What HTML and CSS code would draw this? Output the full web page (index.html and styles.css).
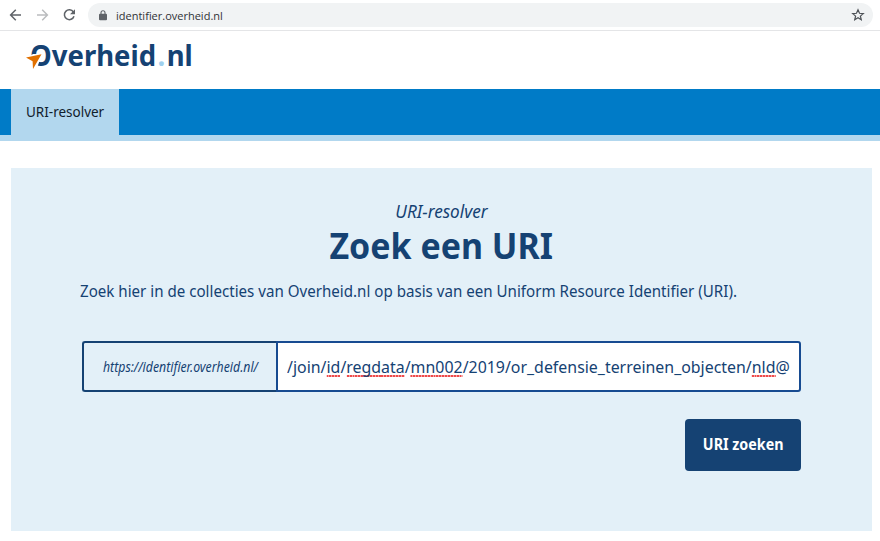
FILE: index.html
```html
<!DOCTYPE html>
<html lang="nl">
<head>
<meta charset="utf-8">
<title>URI-resolver | Overheid.nl</title>
<link rel="stylesheet" href="styles.css">
</head>
<body>
<div class="browser">
  <svg class="controls" width="88" height="30" viewBox="0 0 88 30" fill="none" stroke="#5f6368" stroke-width="1.5">
    <path d="M21 15H11M15.8 9.8 10.6 15l5.2 5.2"/>
    <path stroke="#babcbe" d="M37 15h10.5M42.2 9.8l5.2 5.2-5.2 5.2"/>
    <path d="M73.4 12A4.9 4.9 0 1 0 74 16.2"/>
    <path fill="#5f6368" stroke="none" d="M75 9.2v5h-5z"/>
  </svg>
  <div class="address">
    <svg class="lock" width="8" height="11" viewBox="0 0 8 11"><path d="M2 4V2.8a2 2 0 0 1 4 0V4" fill="none" stroke="#5f6368" stroke-width="1.1"/><rect y="3.8" width="8" height="6.4" rx="1" fill="#5f6368"/></svg>
    <span class="url">identifier.overheid.nl</span>
    <svg class="star" width="14" height="14" viewBox="0 0 14 14"><path d="m7 1.8 1.5 3.5 3.8.3-2.9 2.5.9 3.7L7 9.8l-3.3 2 .9-3.7-2.9-2.5 3.8-.3z" fill="none" stroke="#4d5156" stroke-width="1.2"/></svg>
  </div>
</div>
<header class="brand">
  <div class="logo"><span class="wordmark">Overheid<span class="dot">.</span>nl</span>
    <svg class="arrow" width="18" height="17" viewBox="0 0 18 17"><path d="M3 3.5 7 1l9 0L11 15l-5 0z" fill="#fff"/><path d="M0 4.5 15.5 1.3 7 16 6.6 8.2z" fill="#e17000"/></svg>
  </div>
</header>
<nav class="nav"><a class="tab"><span>URI-resolver</span></a></nav>
<main class="panel">
  <p class="kicker">URI-resolver</p>
  <h1>Zoek een URI</h1>
  <p class="intro">Zoek hier in de collecties van Overheid.nl op basis van een Uniform Resource Identifier (URI).</p>
  <div class="field">
    <div class="prefix"><span>https://identifier.overheid.nl/</span></div>
    <div class="input"><span class="value">/join/<u>id</u>/<u>regdata</u>/<u>mn002</u>/2019/or_defensie_terreinen_objecten/<u>nld</u>@</span></div>
  </div>
  <button class="submit"><span>URI zoeken</span></button>
</main>
</body>
</html>
```
FILE: styles.css
```css
* { box-sizing: border-box; }
body { margin: 0; height: 541px; overflow: hidden; background: #fff; color: #154273; font-family: "Noto Sans", sans-serif; }
p, h1 { margin: 0; white-space: nowrap; }
.browser { display: flex; height: 31px; border-bottom: 1px solid #e4e5e7; }
.controls { flex: none; }
.address { display: flex; align-items: center; width: 785px; height: 24px; margin-top: 3px; padding: 0 8px 0 11px; border-radius: 12px; background: #f1f3f4; }
.url { flex: 1; margin-left: 9px; font-family: "Open Sans", sans-serif; font-size: 11px; color: #303236; white-space: nowrap; }
.brand { height: 58px; padding: 4px 0 0 30px; }
.logo { position: relative; width: max-content; font-size: 28.5px; line-height: 40px; font-weight: 700; white-space: nowrap; }
.wordmark { display: inline-block; transform: scaleX(.965); transform-origin: left; }
.dot { margin: 0 1.5px; color: #9fd0ee; }
.arrow { position: absolute; left: -4px; top: 18px; }
.nav { height: 52px; padding-left: 11px; background: #007bc7; border-bottom: 6px solid #b2d7ee; }
.tab { display: block; width: 108px; height: 46px; padding-left: 15px; background: #b2d7ee; color: #10202c; font-size: 14px; line-height: 45px; white-space: nowrap; }
.tab span { display: inline-block; transform: scaleX(.963); transform-origin: left; }
.panel { display: flex; flex-direction: column; width: 861px; height: 363px; margin: 27px 0 0 11px; padding: 32px 71px 0 70px; background: #e3f0f8; }
.kicker { align-self: center; font-size: 18px; line-height: 22px; font-style: italic; transform: scaleX(.953); }
h1 { align-self: center; margin-top: 3px; font-size: 36.5px; line-height: 40px; font-weight: 700; transform: scaleX(.93); }
.intro { width: max-content; margin: 13px 0 0 -1px; font-size: 16px; line-height: 26px; transform: scaleX(.945); transform-origin: left; }
.field { display: flex; width: 720px; height: 51px; margin: 37px 0 0 1px; }
.prefix { display: flex; align-items: center; width: 194px; padding-left: 18.5px; border: 2px solid #154273; border-right: 0; border-radius: 3px 0 0 3px; font-size: 14px; font-style: italic; white-space: nowrap; }
.prefix span { transform: scaleX(.878); transform-origin: left; }
.input { display: flex; align-items: center; width: 525px; padding-left: 9px; border: 2px solid #174b91; border-radius: 0 3px 3px 0; background: #fff; white-space: nowrap; font-size: 16.5px; }
.value { transform: scaleX(.964); transform-origin: left; }
u { text-decoration: none; background: repeating-linear-gradient(90deg, #ee4b4b 0 2px, #f8a3a3 2px 3px) 0 calc(100% - 1px) / 100% 2px no-repeat; }
.submit { align-self: flex-end; width: 116px; height: 52px; margin-top: 27px; padding: 0 0 2px; border: 0; border-radius: 4px; background: #154273; color: #fff; font: 700 16px "Noto Sans", sans-serif; white-space: nowrap; }
.submit span { display: inline-block; margin: 0 -5px; transform: scaleX(.893); }
```
